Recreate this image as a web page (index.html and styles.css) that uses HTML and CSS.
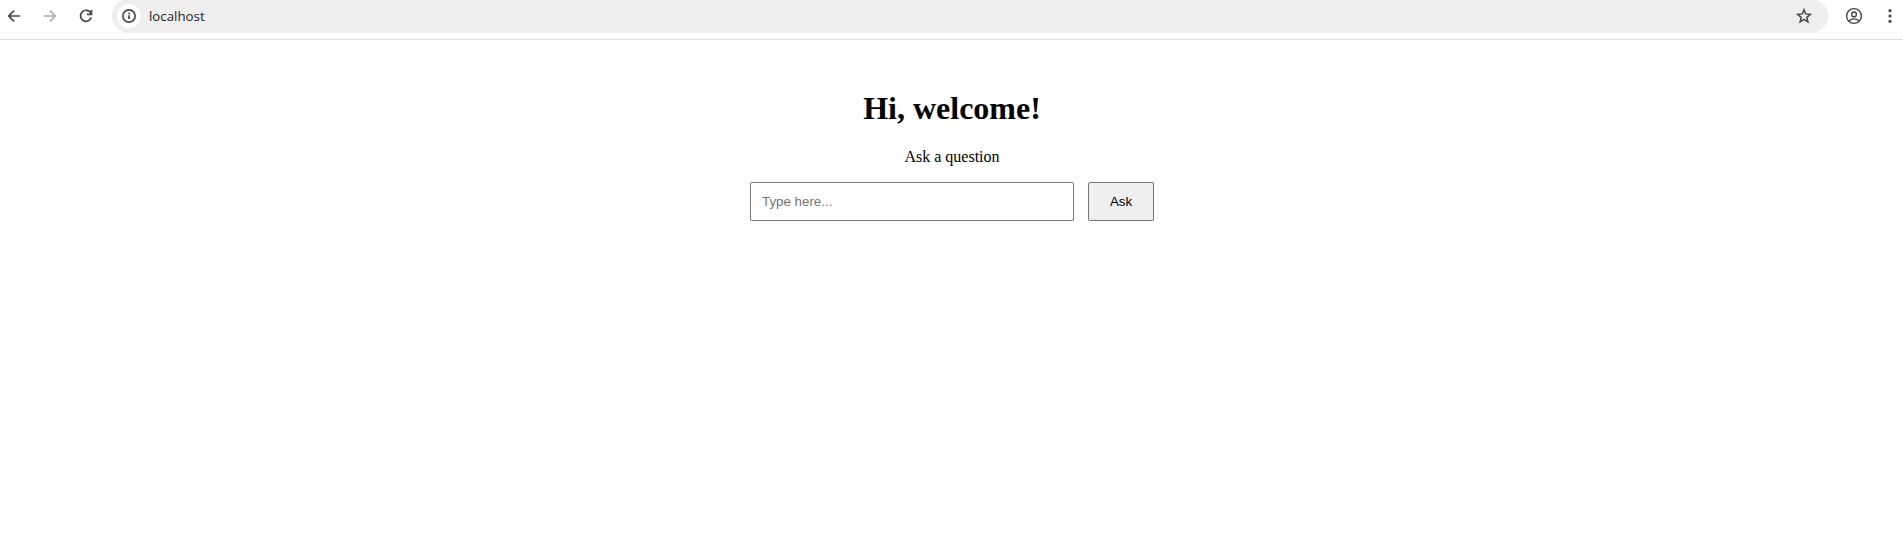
FILE: index.html
```html
<!DOCTYPE html>
<html lang="en">
<head>
<meta charset="utf-8">
<title>localhost</title>
<link rel="stylesheet" href="styles.css">
</head>
<body>
<header class="toolbar">
  <nav class="nav">
    <svg class="icon" viewBox="0 0 16 16"><path d="M14 8H3M8 2.7 2.7 8 8 13.3"/></svg>
    <svg class="icon faded" viewBox="0 0 16 16"><path d="M2 8h11M8 2.7 13.3 8 8 13.3"/></svg>
    <svg class="icon" viewBox="0 0 16 16"><path d="M12.9 5.2A5.5 5.5 0 1 0 13.3 9.4M13.5 1.9v4.5H9"/></svg>
  </nav>
  <div class="address">
    <span class="info"><svg class="icon" viewBox="0 0 16 16"><circle cx="8" cy="8" r="6.1"/><path d="M8 7.3V11M8 4.7v1.6"/></svg></span>
    <span class="url">localhost</span>
    <svg class="icon star" viewBox="0 0 16 16"><path d="M8 1.8 9.7 5.9 14.4 6.3 10.8 9.3 11.9 13.8 8 11.4 4.1 13.8 5.2 9.3 1.6 6.3 6.3 5.9Z"/></svg>
  </div>
  <svg class="icon profile" viewBox="0 0 18 18"><circle cx="9" cy="9" r="7.4"/><circle cx="9" cy="7.4" r="2.4"/><path d="M3.8 14Q9 9.8 14.2 14"/></svg>
  <svg class="icon menu" viewBox="0 0 16 16"><circle cx="8" cy="2.7" r="1.6"/><circle cx="8" cy="8" r="1.6"/><circle cx="8" cy="13.3" r="1.6"/></svg>
</header>
<main class="page">
  <h1 class="title">Hi, welcome!</h1>
  <p class="prompt">Ask a question</p>
  <form class="ask">
    <input class="question" type="text" placeholder="Type here...">
    <button class="submit" type="button">Ask</button>
  </form>
</main>
</body>
</html>
```
FILE: styles.css
```css
* { box-sizing: border-box; }
body {
  margin: 0;
  background: #fff;
  color: #000;
  font-family: "Liberation Serif", "Times New Roman", serif;
}
.toolbar {
  display: flex;
  align-items: center;
  height: 40px;
  padding: 0 5px 7px 6px;
  border-bottom: 1px solid #dedede;
}
.nav { display: flex; gap: 20px; margin-right: 18px; }
.icon {
  display: block;
  flex: none;
  width: 16px;
  height: 16px;
  fill: none;
  stroke: #474747;
  stroke-width: 1.7;
}
.faded { stroke: #ababab; }
.address {
  display: flex;
  align-items: center;
  flex: 1;
  height: 34px;
  margin-top: -1px;
  padding: 0 16px 0 5px;
  border-radius: 17px;
  background: #efedee;
}
.info {
  display: flex;
  align-items: center;
  justify-content: center;
  width: 24px;
  height: 24px;
  border-radius: 50%;
  background: #fff;
}
.url {
  margin-left: 8px;
  color: #1f1f1f;
  font: 13.3px/20px "Open Sans", "Noto Sans", sans-serif;
}
.star { margin-left: auto; stroke-width: 1.5; }
.profile { width: 18px; height: 18px; margin-left: 17px; stroke-width: 1.4; }
.menu { margin-left: 19px; fill: #474747; stroke: none; }
.page { padding: 50px 0 0 1px; text-align: center; }
.title { margin: 0; font-size: 32px; line-height: 37px; }
.prompt { margin: 21px 0 16px; font-size: 16px; line-height: 18px; }
.ask { display: flex; justify-content: center; gap: 14px; }
.question, .submit {
  height: 39px;
  border: 1px solid #767676;
  border-radius: 2px;
  font: 13.333px "Liberation Sans", Arial, sans-serif;
}
.question { width: 324px; padding: 0 11px; background: #fff; }
.question::placeholder { color: #757575; }
.submit { width: 66px; padding: 0; background: #efefef; color: #000; }
```
